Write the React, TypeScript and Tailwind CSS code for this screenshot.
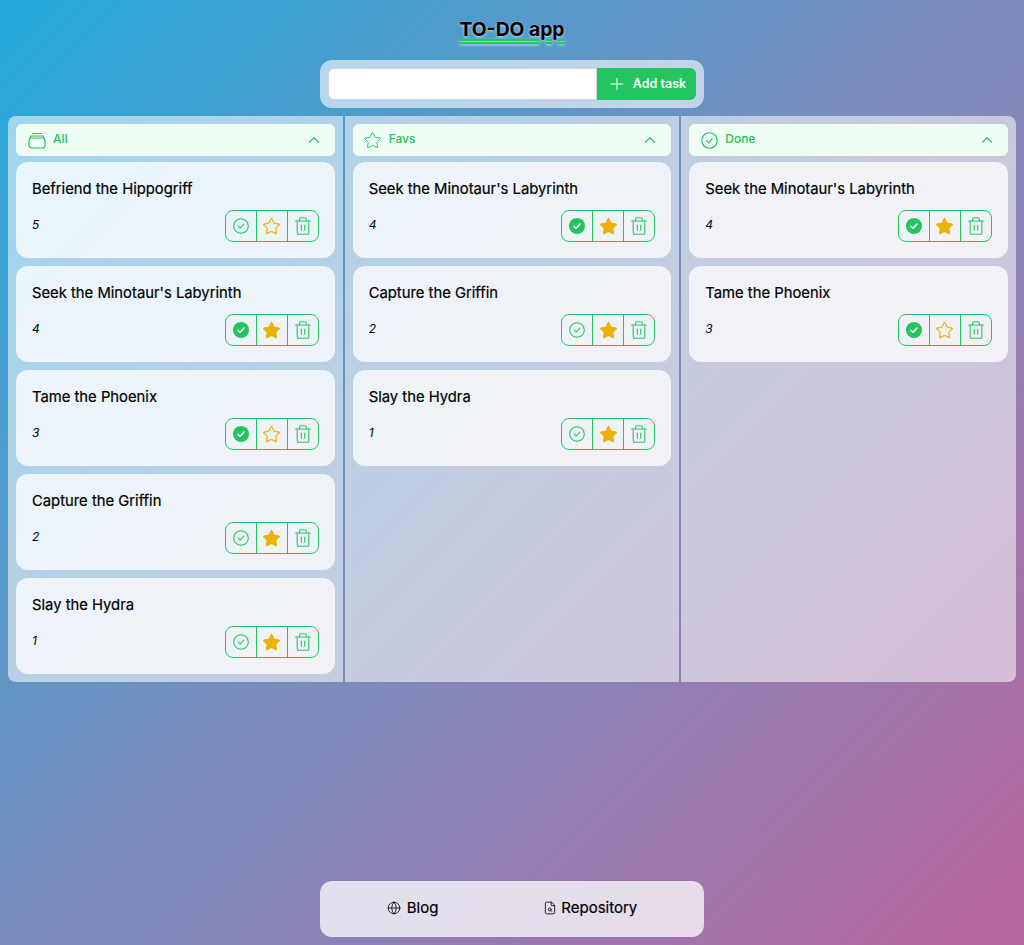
import { ChevronUp, FileSearch, Globe, Plus, Star, Trash2 } from "lucide-react";

interface Task {
  title: string;
  level: number;
  done: boolean;
  fav: boolean;
}

const hippogriff: Task = { title: "Befriend the Hippogriff", level: 5, done: false, fav: false };
const minotaur: Task = { title: "Seek the Minotaur's Labyrinth", level: 4, done: true, fav: true };
const phoenix: Task = { title: "Tame the Phoenix", level: 3, done: true, fav: false };
const griffin: Task = { title: "Capture the Griffin", level: 2, done: false, fav: true };
const hydra: Task = { title: "Slay the Hydra", level: 1, done: false, fav: true };

function FilledCheck() {
  return (
    <svg width="16" height="16" viewBox="0 0 16 16" fill="none">
      <circle cx="8" cy="8" r="8" fill="#22c55e" />
      <path d="M5 8.3 7.1 10.3 11 6" stroke="white" strokeWidth="1.6" strokeLinecap="round" strokeLinejoin="round" />
    </svg>
  );
}

function OutlineCheck({ size = 16 }: { size?: number }) {
  return (
    <svg width={size} height={size} viewBox="0 0 16 16" fill="none" stroke="#22c55e" strokeWidth="1.1">
      <circle cx="8" cy="8" r="7.3" />
      <path d="M5.3 8.2 7.2 10 10.7 6.2" strokeLinecap="round" strokeLinejoin="round" />
    </svg>
  );
}

function StackIcon() {
  return (
    <svg width="18" height="18" viewBox="0 0 18 18" fill="none" stroke="#22c55e" strokeWidth="1.2">
      <path d="M4.5 2.5h9M3 5h12" strokeLinecap="round" />
      <rect x="1" y="7" width="16" height="10" rx="2.8" />
      <path d="M3 5.2 1.6 8M15 5.2l1.4 2.8" />
    </svg>
  );
}

function TaskCard({ task }: { task: Task }) {
  return (
    <div className="h-24 rounded-xl bg-white/75 px-4 pt-4">
      <p className="text-[14.8px] leading-[22px] font-normal text-black [-webkit-text-stroke:0.2px_black]">{task.title}</p>
      <div className="mt-2.5 flex items-start justify-between">
        <span className="mt-[7px] text-xs leading-4 text-black italic">{task.level}</span>
        <div className="flex h-8 rounded-lg border border-[#22c55e]">
          <div className="flex w-[30px] items-center justify-center">
            {task.done ? <FilledCheck /> : <OutlineCheck />}
          </div>
          <div className="flex w-[32px] items-center justify-center border-x border-[#22c55e]">
            <Star
              size={19}
              strokeWidth={1.5}
              color="#eab308"
              fill={task.fav ? "#eab308" : "none"}
            />
          </div>
          <div className="flex w-[30px] items-center justify-center">
            <Trash2 size={20} strokeWidth={1.25} color="#22c55e" />
          </div>
        </div>
      </div>
    </div>
  );
}

function Column({
  label,
  icon,
  tasks,
  className,
}: {
  label: string;
  icon: React.ReactNode;
  tasks: Task[];
  className: string;
}) {
  return (
    <section className={`bg-white/55 p-2 ${className}`}>
      <div className="flex h-8 items-center justify-between rounded-md bg-[#effdf4] pr-3 pl-3 text-[#22c55e]">
        <div className="flex items-center gap-[7px]">
          {icon}
          <span className="-mt-0.5 text-xs font-medium">{label}</span>
        </div>
        <ChevronUp size={18} strokeWidth={1.5} />
      </div>
      <div className="mt-1.5 flex flex-col gap-2">
        {tasks.map((task) => (
          <TaskCard key={task.title} task={task} />
        ))}
      </div>
    </section>
  );
}

export default function App() {
  return (
    <div className="flex min-h-[945px] flex-col items-center bg-[linear-gradient(135deg,#22aadb_0%,#7c8cbc_50%,#8c82b6_65%,#b8649c_100%)] px-2 pb-2 font-['Inter',sans-serif]">
      <h1 className="mt-[18px] text-[19.3px] leading-[22px] font-bold text-black underline decoration-[#22c55e] decoration-double decoration-[1.5px] underline-offset-[3px] [text-shadow:0_1px_3px_rgba(255,255,255,0.7)]">
        TO-DO app
      </h1>

      {/* Add task */}
      <div className="mt-5 flex w-[384px] rounded-xl bg-white/60 p-2">
        <input className="h-8 min-w-0 flex-1 rounded-l-md border border-gray-300 bg-white outline-none" />
        <button className="flex h-8 w-[99px] items-center justify-center gap-1.5 rounded-r-md bg-[#22c55e] text-[12.5px] font-semibold text-white">
          <Plus size={20} strokeWidth={1.25} />
          Add task
        </button>
      </div>

      {/* Columns */}
      <main className="mt-2 grid w-full grid-cols-3 items-stretch gap-0.5">
        <Column
          label="All"
          icon={<StackIcon />}
          tasks={[hippogriff, minotaur, phoenix, griffin, hydra]}
          className="rounded-l-lg"
        />
        <Column
          label="Favs"
          icon={<Star size={19} strokeWidth={1.25} className="-ml-0.5" />}
          tasks={[minotaur, griffin, hydra]}
          className=""
        />
        <Column
          label="Done"
          icon={<OutlineCheck size={17} />}
          tasks={[minotaur, phoenix]}
          className="rounded-r-lg"
        />
      </main>

      {/* Footer */}
      <footer className="mt-auto flex h-14 w-[384px] items-center justify-center gap-[105px] rounded-xl bg-white/75 pb-0.5 text-[15px] text-black [-webkit-text-stroke:0.2px_black]">
        <a className="flex items-center gap-1.5">
          <Globe size={14} strokeWidth={1.4} />
          Blog
        </a>
        <a className="flex items-center gap-1">
          <FileSearch size={14} strokeWidth={1.4} />
          Repository
        </a>
      </footer>
    </div>
  );
}
